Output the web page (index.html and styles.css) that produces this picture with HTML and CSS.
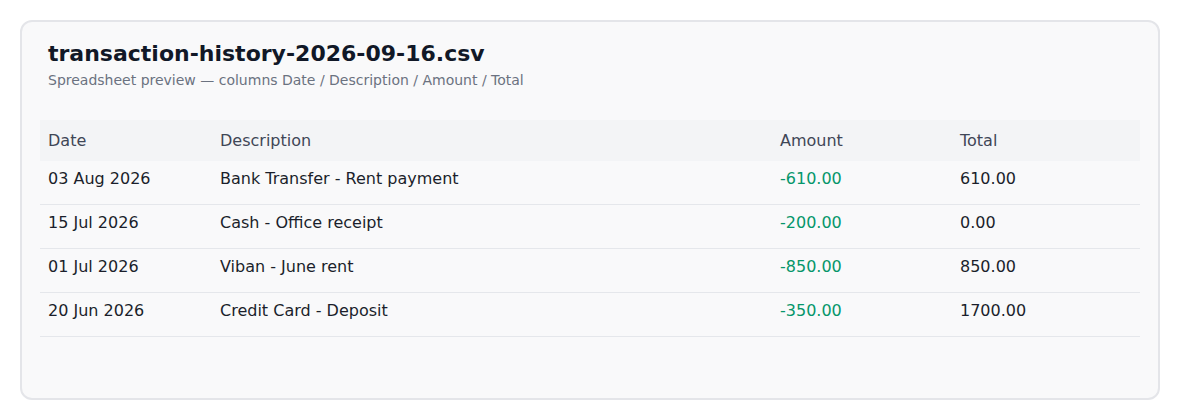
FILE: index.html
```html
<!DOCTYPE html>
<html lang="en">
<head>
    <meta charset="UTF-8">
    <title>transaction-history-2026-09-16.csv</title>
    <link rel="stylesheet" href="styles.css">
</head>
<body>
    <div class="preview-card">
        <div class="preview-header">
            <h1 class="file-name">transaction-history-2026-09-16.csv</h1>
            <p class="file-info">Spreadsheet preview — columns Date / Description / Amount / Total</p>
        </div>

        <table class="sheet">
            <colgroup>
                <col class="col-date">
                <col class="col-desc">
                <col class="col-amount">
                <col class="col-total">
            </colgroup>
            <thead>
                <tr>
                    <th>Date</th>
                    <th>Description</th>
                    <th>Amount</th>
                    <th>Total</th>
                </tr>
            </thead>
            <tbody>
                <tr>
                    <td>03 Aug 2026</td>
                    <td>Bank Transfer - Rent payment</td>
                    <td class="amount">-610.00</td>
                    <td>610.00</td>
                </tr>
                <tr>
                    <td>15 Jul 2026</td>
                    <td>Cash - Office receipt</td>
                    <td class="amount">-200.00</td>
                    <td>0.00</td>
                </tr>
                <tr>
                    <td>01 Jul 2026</td>
                    <td>Viban - June rent</td>
                    <td class="amount">-850.00</td>
                    <td>850.00</td>
                </tr>
                <tr>
                    <td>20 Jun 2026</td>
                    <td>Credit Card - Deposit</td>
                    <td class="amount">-350.00</td>
                    <td>1700.00</td>
                </tr>
            </tbody>
        </table>
    </div>
</body>
</html>
```

FILE: styles.css
```css
body {
    margin: 20px;
    font-family: "DejaVu Sans", Verdana, sans-serif;
    background-color: #ffffff;
    color: #1f2430;
}

.preview-card {
    box-sizing: border-box;
    width: 1140px;
    height: 380px;
    padding: 18px;
    background-color: #f9f9fa;
    border: 2px solid #e4e5e9;
    border-radius: 12px;
}

.preview-header {
    padding: 1px 8px 0;
    margin-bottom: 32px;
}

.file-name {
    margin: 0;
    font-size: 22px;
    font-weight: bold;
    color: #111827;
}

.file-info {
    margin: 6px 0 0;
    font-size: 14px;
    color: #6b7280;
}

.sheet {
    width: 1100px;
    table-layout: fixed;
    border-collapse: collapse;
    font-size: 16px;
    line-height: 19px;
}

.col-date {
    width: 172px;
}

.col-desc {
    width: 560px;
}

.col-amount {
    width: 180px;
}

.col-total {
    width: 188px;
}

.sheet th {
    padding: 11px 8px;
    text-align: left;
    font-weight: normal;
    color: #3f4656;
    background-color: #f3f4f6;
}

.sheet td {
    padding: 8px 8px 16px;
    text-align: left;
    color: #1b1f2b;
    border-bottom: 1px solid #e5e7eb;
}

.sheet td.amount {
    color: #05966a;
}
```
